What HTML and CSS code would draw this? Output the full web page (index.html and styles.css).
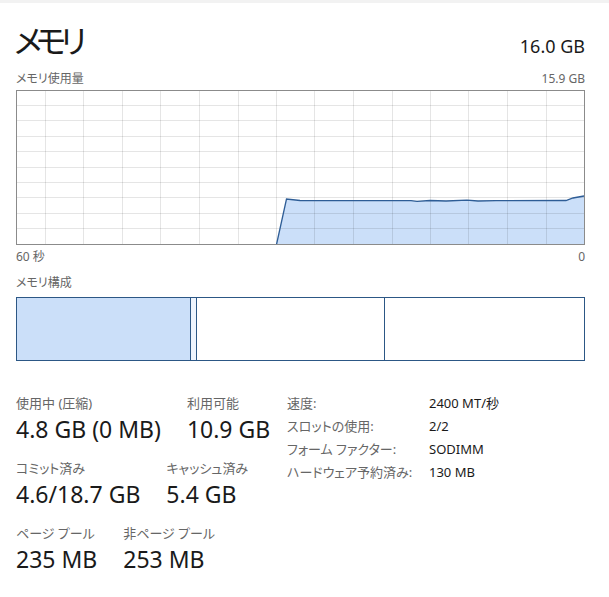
FILE: index.html
```html
<!DOCTYPE html>
<html lang="ja">
<head>
    <meta charset="UTF-8">
    <title>メモリ</title>
    <link rel="stylesheet" href="styles.css">
</head>
<body>
    <div class="pane">
        <div class="header">
            <div class="title">メモリ</div>
            <div class="total">16.0 GB</div>
        </div>
        <div class="caption-row usage-label">
            <span>メモリ使用量</span>
            <span>15.9 GB</span>
        </div>

        <!-- usage graph -->
        <svg class="graph" width="569" height="155" viewBox="0 0 569 155">
            <polygon points="260.5,154.5 270.5,109 284,110.5 330,110.7 395,110.7 401,111.3 414,110.5 430,111 451,110.2 462,111 480,110.7 550,110.5 557,108 568,106 568,154.5" fill="#cbdff9"/>
            <g stroke="#000" stroke-opacity="0.1" stroke-width="1">
                <line x1="29.5" y1="0" x2="29.5" y2="155"/>
                <line x1="67.5" y1="0" x2="67.5" y2="155"/>
                <line x1="106.5" y1="0" x2="106.5" y2="155"/>
                <line x1="144.5" y1="0" x2="144.5" y2="155"/>
                <line x1="183.5" y1="0" x2="183.5" y2="155"/>
                <line x1="222.5" y1="0" x2="222.5" y2="155"/>
                <line x1="260.5" y1="0" x2="260.5" y2="155"/>
                <line x1="298.5" y1="0" x2="298.5" y2="155"/>
                <line x1="337.5" y1="0" x2="337.5" y2="155"/>
                <line x1="376.5" y1="0" x2="376.5" y2="155"/>
                <line x1="414.5" y1="0" x2="414.5" y2="155"/>
                <line x1="452.5" y1="0" x2="452.5" y2="155"/>
                <line x1="491.5" y1="0" x2="491.5" y2="155"/>
                <line x1="530.5" y1="0" x2="530.5" y2="155"/>
                <line x1="0" y1="15.5" x2="569" y2="15.5"/>
                <line x1="0" y1="30.5" x2="569" y2="30.5"/>
                <line x1="0" y1="46.5" x2="569" y2="46.5"/>
                <line x1="0" y1="61.5" x2="569" y2="61.5"/>
                <line x1="0" y1="77.5" x2="569" y2="77.5"/>
                <line x1="0" y1="92.5" x2="569" y2="92.5"/>
                <line x1="0" y1="107.5" x2="569" y2="107.5"/>
                <line x1="0" y1="123.5" x2="569" y2="123.5"/>
                <line x1="0" y1="138.5" x2="569" y2="138.5"/>
            </g>
            <polyline points="260.5,154.5 270.5,109 284,110.5 330,110.7 395,110.7 401,111.3 414,110.5 430,111 451,110.2 462,111 480,110.7 550,110.5 557,108 568,106" fill="none" stroke="#2e5d96" stroke-width="1.3"/>
            <rect x="0.5" y="0.5" width="568" height="154" fill="none" stroke="#8b8b8b"/>
        </svg>
        <div class="caption-row axis">
            <span>60 秒</span>
            <span>0</span>
        </div>

        <div class="caption-row comp-label">
            <span>メモリ構成</span>
        </div>
        <div class="composition">
            <div class="seg in-use"></div>
            <div class="seg modified"></div>
            <div class="seg standby"></div>
            <div class="seg free"></div>
        </div>

        <div class="stats">
            <div class="stat-list">
                <div class="stat-row">
                    <div class="stat">
                        <div class="stat-label">使用中 (圧縮)</div>
                        <div class="stat-value">4.8 GB (0 MB)</div>
                    </div>
                    <div class="stat">
                        <div class="stat-label">利用可能</div>
                        <div class="stat-value">10.9 GB</div>
                    </div>
                </div>
                <div class="stat-row">
                    <div class="stat">
                        <div class="stat-label">コミット済み</div>
                        <div class="stat-value">4.6/18.7 GB</div>
                    </div>
                    <div class="stat">
                        <div class="stat-label">キャッシュ済み</div>
                        <div class="stat-value">5.4 GB</div>
                    </div>
                </div>
                <div class="stat-row">
                    <div class="stat">
                        <div class="stat-label">ページ プール</div>
                        <div class="stat-value">235 MB</div>
                    </div>
                    <div class="stat">
                        <div class="stat-label">非ページ プール</div>
                        <div class="stat-value">253 MB</div>
                    </div>
                </div>
            </div>

            <dl class="details">
                <dt>速度:</dt><dd>2400 MT/秒</dd>
                <dt>スロットの使用:</dt><dd>2/2</dd>
                <dt>フォーム ファクター:</dt><dd>SODIMM</dd>
                <dt>ハードウェア予約済み:</dt><dd>130 MB</dd>
            </dl>
        </div>
    </div>
</body>
</html>
```

FILE: styles.css
```css
body {
    margin: 0;
    background: #fff;
    font-family: "Noto Sans", "Noto Sans CJK JP", sans-serif;
    font-feature-settings: "palt";
    color: #1a1a1a;
}
.pane {
    width: 569px;
    padding: 18px 24px 0 16px;
    border-top: 3px solid #f2f2f2;
}
.header {
    display: flex;
    justify-content: space-between;
    align-items: baseline;
    margin-left: -2px;
}
.title {
    font-size: 32px;
    line-height: 40px;
    letter-spacing: -6px;
}
.total {
    font-size: 18px;
}
.caption-row {
    display: flex;
    justify-content: space-between;
    font-size: 12px;
    line-height: 16px;
    color: #666;
    margin-top: 5px;
}
.usage-label {
    margin-top: 10px;
}
.graph {
    display: block;
    margin-top: 3px;
}
.axis {
    margin-top: 4px;
}
.comp-label {
    margin-top: 10px;
}
.composition {
    display: flex;
    height: 62px;
    margin-top: 6px;
    border: 1px solid #2c5785;
}
.seg {
    border-right: 1px solid #2c5785;
}
.seg.in-use {
    width: 173px;
    background: #cbdff9;
}
.seg.modified {
    width: 5px;
    background: #eef4fd;
}
.seg.standby {
    width: 187px;
}
.seg.free {
    flex: 1;
    border-right: 0;
}
.stats {
    display: grid;
    grid-template-columns: 271px auto;
    align-items: start;
    margin-top: 33px;
}
.stat-list {
    display: flex;
    flex-direction: column;
    gap: 13px;
}
.stat-row {
    display: flex;
    gap: 26px;
}
.stat-label {
    font-size: 13px;
    line-height: 18px;
    color: #666;
}
.stat-value {
    font-size: 23px;
    line-height: 34px;
}
.details {
    display: grid;
    grid-template-columns: 142px auto;
    row-gap: 5px;
    margin: 0;
    font-size: 13px;
    line-height: 18px;
}
.details dt {
    color: #666;
}
.details dd {
    margin: 0;
    color: #1a1a1a;
}
```
